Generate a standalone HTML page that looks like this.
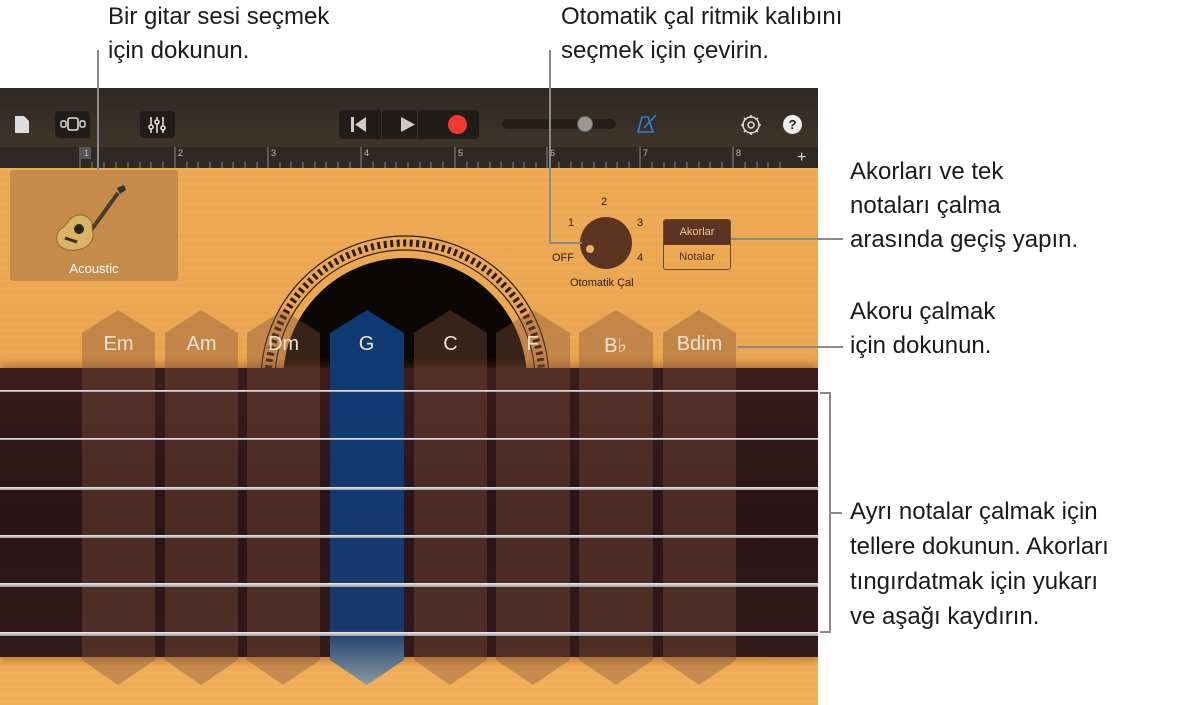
<!DOCTYPE html>
<html><head><meta charset="utf-8"><style>
*{margin:0;padding:0;box-sizing:border-box}
body{width:1178px;height:705px;background:#fff;position:relative;overflow:hidden;font-family:"Liberation Sans",sans-serif}
.c{position:absolute;font-size:24px;line-height:34px;color:#1a1a1a;white-space:nowrap}
.ln{position:absolute;background:#8a8a8a}
#scr{position:absolute;left:0;top:88px;width:818px;height:617px;overflow:hidden;background:linear-gradient(180deg,#f0ad55,#eba550 50%,#f2b05a)}
#tb{position:absolute;left:0;top:0;width:818px;height:59px;background:linear-gradient(180deg,#2d2924,#3f352a)}
#ru{position:absolute;left:0;top:59px;width:818px;height:21px;background:#2e2925}
.ic{position:absolute;color:#ddd}
.chord{position:absolute;top:222px;width:73px;height:375px}
.chord span{position:absolute;top:23px;width:100%;text-align:center;color:#efe3cf;font-size:20px}
.str{position:absolute;left:0;width:818px;background:linear-gradient(180deg,#eee,#999);}
</style></head><body>
<div class="c" style="left:108px;top:0">Bir gitar sesi seçmek<br>için dokunun.</div>
<div class="c" style="left:561px;top:0">Otomatik çal ritmik kalıbını<br>seçmek için çevirin.</div>
<div class="c" style="left:850px;top:155px;line-height:34px">Akorları ve tek<br>notaları çalma<br>arasında geçiş yapın.</div>
<div class="c" style="left:850px;top:295px;line-height:34px">Akoru çalmak<br>için dokunun.</div>
<div class="c" style="left:850px;top:494px;line-height:35px">Ayrı notalar çalmak için<br>tellere dokunun. Akorları<br>tıngırdatmak için yukarı<br>ve aşağı kaydırın.</div>

<div id="scr">
 <div style="position:absolute;left:0;top:80px;width:818px;height:537px;background:repeating-linear-gradient(180deg,rgba(255,255,255,0.015) 0 3px,rgba(160,90,20,0.02) 3px 7px)"></div>
 <div id="tb">
  <svg class="ic" style="left:14px;top:27px" width="16" height="19"><path d="M1 1h9l5 5v12H1z" fill="#ddd"/></svg>
  <div style="position:absolute;left:55px;top:23px;width:35px;height:27px;background:#1f1c19;border-radius:4px"></div>
  <svg style="position:absolute;left:60px;top:28px" width="26" height="16"><rect x="8" y="2" width="10" height="12" rx="2" fill="none" stroke="#ddd" stroke-width="1.6"/><rect x="1" y="5" width="5" height="6" rx="1.5" fill="none" stroke="#ddd" stroke-width="1.4"/><rect x="20" y="5" width="5" height="6" rx="1.5" fill="none" stroke="#ddd" stroke-width="1.4"/></svg>
  <div style="position:absolute;left:140px;top:23px;width:35px;height:27px;background:#1f1c19;border-radius:4px"></div>
  <svg style="position:absolute;left:147px;top:28px" width="22" height="18" stroke="#ddd" stroke-width="1.6"><path d="M4 1v16M10 1v16M16 1v16"/><circle cx="4" cy="11" r="2" fill="#1f1c19"/><circle cx="10" cy="6" r="2" fill="#1f1c19"/><circle cx="16" cy="12" r="2" fill="#1f1c19"/></svg>
  <div style="position:absolute;left:339px;top:22px;width:140px;height:29px;background:#1f1c19;border-radius:4px"></div>
  <div style="position:absolute;left:381px;top:22px;width:1px;height:29px;background:#3a3530"></div>
  <div style="position:absolute;left:417px;top:22px;width:1px;height:29px;background:#3a3530"></div>
  <svg style="position:absolute;left:350px;top:28px" width="20" height="17"><rect x="1" y="1" width="3" height="15" fill="#ccc"/><path d="M16 1v15L5 8.5z" fill="#ccc"/></svg>
  <svg style="position:absolute;left:400px;top:28px" width="18" height="17"><path d="M1 1v15l14-7.5z" fill="#ccc"/></svg>
  <div style="position:absolute;left:448px;top:27px;width:19px;height:19px;border-radius:50%;background:#f43a30"></div>
  <div style="position:absolute;left:502px;top:31px;width:114px;height:10px;border-radius:5px;background:#23201c"></div>
  <div style="position:absolute;left:577px;top:28px;width:16px;height:16px;border-radius:50%;background:#9a9795;border:1px solid #666"></div>
  <svg style="position:absolute;left:637px;top:26px" width="22" height="20" stroke="#2f7de0" stroke-width="1.6" fill="none"><path d="M5 3h6l5 15H1z"/><path d="M7 14l12-13"/></svg>
  <svg style="position:absolute;left:740px;top:26px" width="22" height="22" stroke="#ddd" stroke-width="1.5" fill="none"><circle cx="11" cy="11" r="8"/><circle cx="11" cy="11" r="3"/><path d="M11 1v3M11 18v3M1 11h3M18 11h3M4 4l2 2M16 16l2 2M4 18l2-2M16 6l2-2"/></svg>
  <div style="position:absolute;left:783px;top:27px;width:19px;height:19px;border-radius:50%;background:#eee;color:#222;font-size:13px;font-weight:bold;text-align:center;line-height:19px">?</div>
 </div>
 <div id="ru">
  <svg width="818" height="21" style="position:absolute;left:0;top:0" font-family="Liberation Sans" font-size="9" fill="#bbb">
   <g stroke="#888" stroke-width="1">
    <path d="M80 0v21M175 0v21M268 0v21M361 0v21M455 0v21M547 0v21M640 0v21M733 0v21"/>
    <path d="M92 15v6M104 15v6M116 15v6M128 15v6M140 15v6M151 15v6M163 15v6M187 15v6M198 15v6M210 15v6M222 15v6M233 15v6M245 15v6M257 15v6M280 15v6M291 15v6M303 15v6M315 15v6M326 15v6M338 15v6M350 15v6M373 15v6M385 15v6M396 15v6M408 15v6M420 15v6M431 15v6M443 15v6M467 15v6M478 15v6M490 15v6M501 15v6M513 15v6M524 15v6M536 15v6M559 15v6M571 15v6M582 15v6M594 15v6M606 15v6M617 15v6M629 15v6M652 15v6M664 15v6M675 15v6M687 15v6M699 15v6M710 15v6M722 15v6M745 15v6M757 15v6M768 15v6M780 15v6"/>
   </g>
   <rect x="79" y="0" width="12" height="12" fill="#555"/>
   <text x="84" y="9">1</text><text x="178" y="9">2</text><text x="271" y="9">3</text><text x="364" y="9">4</text><text x="458" y="9">5</text><text x="550" y="9">6</text><text x="643" y="9">7</text><text x="736" y="9">8</text>
   <text x="797" y="15" font-size="16" fill="#ddd">+</text>
  </svg>
 </div>
 <!-- instrument tile -->
 <div style="position:absolute;left:10px;top:82px;width:168px;height:111px;background:#c58b4a;border-radius:3px"></div>
 <svg style="position:absolute;left:55px;top:95px" width="75" height="75">
  <path d="M63 10l-26 36" stroke="#4a3a2a" stroke-width="4"/>
  <path d="M62 5l7-3 2 5-6 4z" fill="#333"/>
  <path d="M18 34c9-5 20 0 19 10 0 5 3 9-1 15-6 9-24 11-31 4-6-6-3-15 2-18 6-3 5-8 11-11z" fill="#d9b464" stroke="#8d6a30"/>
  <circle cx="24" cy="46" r="5" fill="#2d2418"/>
  <path d="M10 55l12 4" stroke="#3a2a1a" stroke-width="3"/>
 </svg>
 <div style="position:absolute;left:10px;top:173px;width:168px;text-align:center;color:#fff;font-size:13px">Acoustic</div>
 <!-- soundhole -->
 <svg style="position:absolute;left:0;top:0" width="818" height="617">
  <circle cx="405" cy="292" r="144" fill="none" stroke="#2a1d10" stroke-width="1.2"/>
  <circle cx="405" cy="292" r="137" fill="none" stroke="#2a1d10" stroke-width="7" stroke-dasharray="3 3.5"/>
  <circle cx="405" cy="292" r="130" fill="none" stroke="#2a1d10" stroke-width="1.2"/>
  <circle cx="405" cy="292" r="122" fill="#0b0705"/>
 </svg>
 <!-- auto play -->
 <div style="position:absolute;left:580px;top:129px;width:52px;height:52px;border-radius:50%;background:#5c3522"></div>
 <div style="position:absolute;left:586px;top:157px;width:8px;height:8px;border-radius:50%;background:#f0b25c"></div>
 <div style="position:absolute;font-size:11px;color:#2a1d10;left:601px;top:108px">2</div>
 <div style="position:absolute;font-size:11px;color:#2a1d10;left:568px;top:129px">1</div>
 <div style="position:absolute;font-size:11px;color:#2a1d10;left:637px;top:129px">3</div>
 <div style="position:absolute;font-size:11px;color:#2a1d10;left:552px;top:164px">OFF</div>
 <div style="position:absolute;font-size:11px;color:#2a1d10;left:637px;top:164px">4</div>
 <div style="position:absolute;font-size:11px;color:#2a1d10;left:570px;top:189px">Otomatik Çal</div>
 <div style="position:absolute;left:663px;top:131px;width:68px;height:51px;border:1px solid #6a4a30;border-radius:3px;overflow:hidden;font-size:11px;text-align:center">
  <div style="height:25px;background:#5c3522;color:#f0c890;line-height:25px">Akorlar</div>
  <div style="height:25px;color:#4a3020;line-height:25px">Notalar</div>
 </div>
 <!-- fretboard -->
 <div style="position:absolute;left:0;top:280px;width:818px;height:289px;background:linear-gradient(180deg,#3a1c1c,#2a1418 50%,#321a1a);box-shadow:0 -4px 8px rgba(120,60,20,.4),0 4px 8px rgba(120,60,20,.4)"></div>
 <!-- chords -->
 <svg style="position:absolute;left:0;top:0" width="818" height="617">
  <defs><linearGradient id="b" x1="0" y1="0" x2="0" y2="1"><stop offset="0" stop-color="#0d3a72"/><stop offset=".85" stop-color="#173a6e"/><stop offset="1" stop-color="#8a9aa0"/></linearGradient></defs>
  <g fill="rgba(130,82,58,.38)">
   <path d="M82 245l36-23 37 23v327l-37 25-36-25z"/>
   <path d="M165 245l36-23 37 23v327l-37 25-36-25z"/>
   <path d="M247 245l36-23 37 23v327l-37 25-36-25z"/>
   <path d="M414 245l36-23 37 23v327l-37 25-36-25z"/>
   <path d="M496 245l37-23 37 23v327l-37 25-37-25z"/>
   <path d="M579 245l37-23 37 23v327l-37 25-37-25z"/>
   <path d="M663 245l36-23 37 23v327l-37 25-36-25z"/>
  </g>
  <path d="M330 245l37-23 37 23v327l-37 25-37-25z" fill="url(#b)"/>
 </svg>
 <div class="chord" style="left:82px"><span>Em</span></div>
 <div class="chord" style="left:165px"><span>Am</span></div>
 <div class="chord" style="left:247px"><span>Dm</span></div>
 <div class="chord" style="left:330px"><span>G</span></div>
 <div class="chord" style="left:414px"><span>C</span></div>
 <div class="chord" style="left:496px"><span>F</span></div>
 <div class="chord" style="left:579px"><span>B♭</span></div>
 <div class="chord" style="left:663px"><span>Bdim</span></div>
 <div class="str" style="top:302px;height:2px"></div>
 <div class="str" style="top:350px;height:2px"></div>
 <div class="str" style="top:399px;height:3px"></div>
 <div class="str" style="top:447px;height:3px"></div>
 <div class="str" style="top:495px;height:4px"></div>
 <div class="str" style="top:544px;height:4px"></div>
</div>

<!-- leader lines -->
<div class="ln" style="left:97px;top:50px;width:2px;height:120px"></div>
<div class="ln" style="left:549px;top:50px;width:2px;height:193px"></div>
<div class="ln" style="left:549px;top:242px;width:33px;height:2px"></div>
<div class="ln" style="left:731px;top:238px;width:112px;height:2px"></div>
<div class="ln" style="left:737px;top:346px;width:106px;height:2px"></div>
<div class="ln" style="left:829px;top:392px;width:2px;height:241px"></div>
<div class="ln" style="left:820px;top:392px;width:10px;height:2px"></div>
<div class="ln" style="left:820px;top:631px;width:10px;height:2px"></div>
<div class="ln" style="left:830px;top:512px;width:12px;height:2px"></div>
</body></html>
